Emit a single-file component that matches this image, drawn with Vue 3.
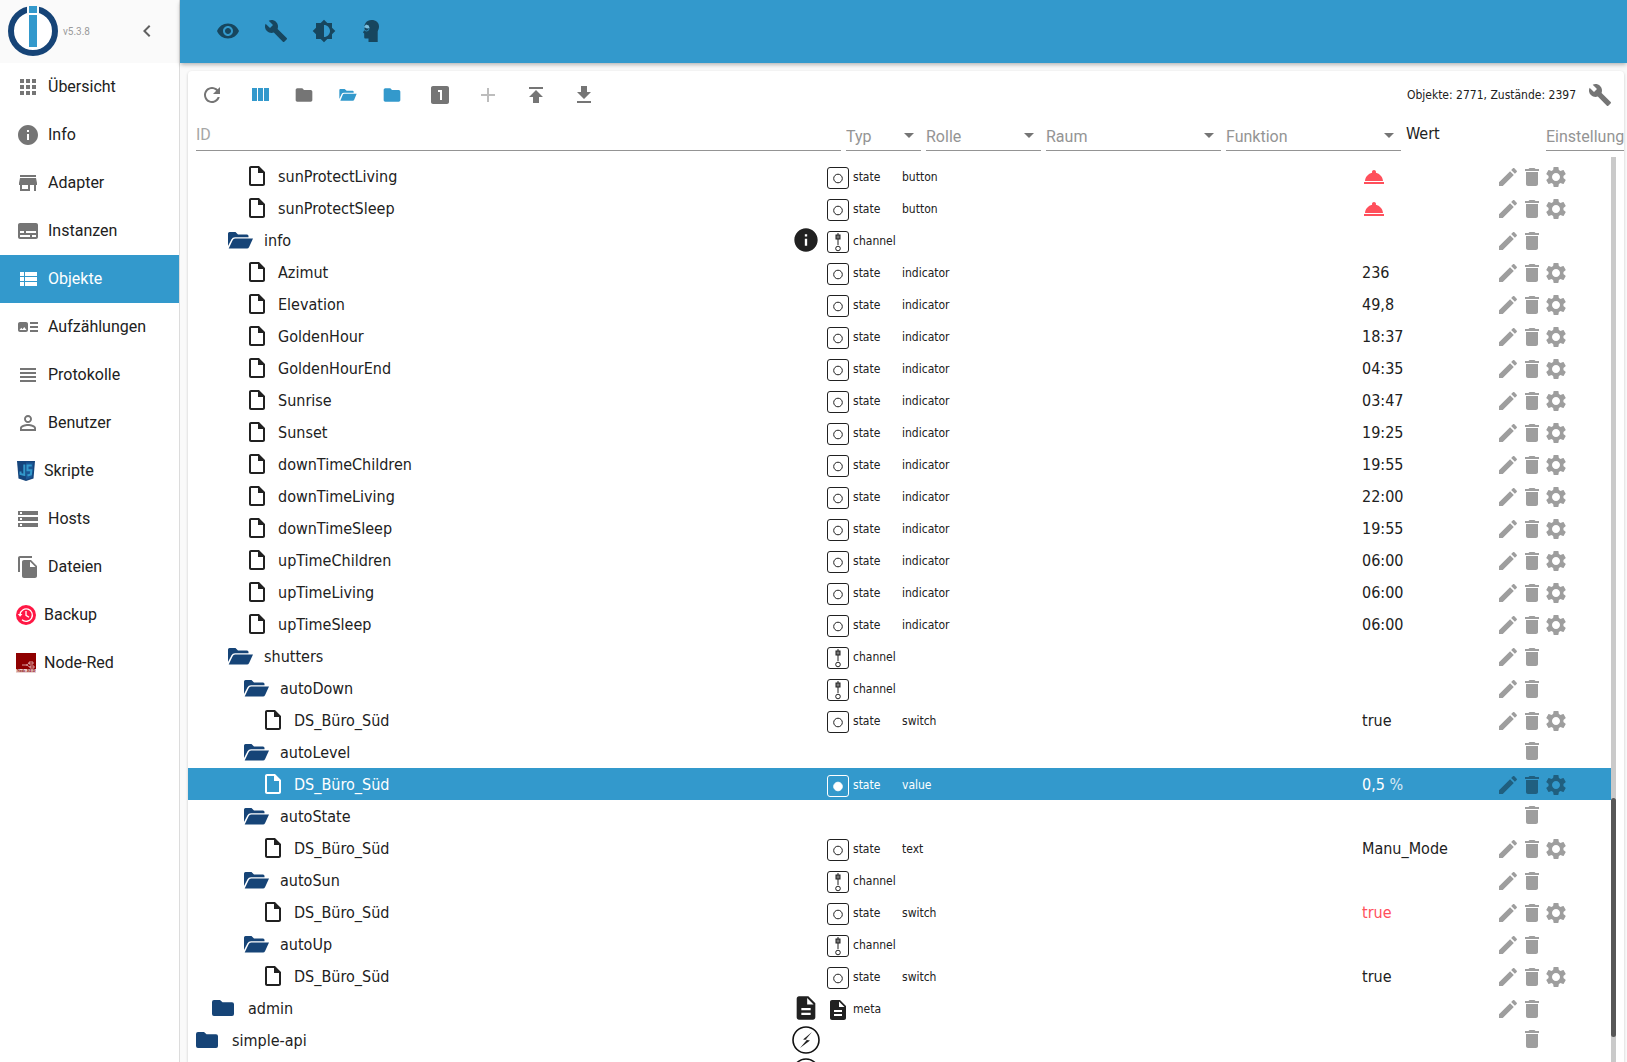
<script setup>
import { ref } from 'vue'

const icons = {
  apps: 'M4 8h4V4H4v4zm6 12h4v-4h-4v4zm-6 0h4v-4H4v4zm0-6h4v-4H4v4zm6 0h4v-4h-4v4zm6-10v4h4V4h-4zm-6 4h4V4h-4v4zm6 6h4v-4h-4v4zm0 6h4v-4h-4v4z',
  info: 'M12 2C6.48 2 2 6.48 2 12s4.48 10 10 10 10-4.48 10-10S17.52 2 12 2zm1 15h-2v-6h2v6zm0-8h-2V7h2v2z',
  store: 'M20 4H4v2h16V4zm1 10v-2l-1-5H4l-1 5v2h1v6h10v-6h4v6h2v-6h1zm-9 4H6v-4h6v4z',
  subtitles: 'M20 4H4c-1.1 0-2 .9-2 2v12c0 1.1.9 2 2 2h16c1.1 0 2-.9 2-2V6c0-1.1-.9-2-2-2zM4 12h4v2H4v-2zm10 6H4v-2h10v2zm6 0h-4v-2h4v2zm0-4H10v-2h10v2z',
  viewList: 'M4 14h4v-4H4v4zm0 5h4v-4H4v4zM4 9h4V5H4v4zm5 5h12v-4H9v4zm0 5h12v-4H9v4zM9 5v4h12V5H9z',
  artTrack: 'M22 13h-8v-2h8v2zm0-6h-8v2h8V7zm-8 10h8v-2h-8v2zm-2-8v6c0 1.1-.9 2-2 2H4c-1.1 0-2-.9-2-2V9c0-1.1.9-2 2-2h6c1.1 0 2 .9 2 2zm-1.500 6l-2.250-3-1.750 2.260-1.250-1.510L3.500 15h7z',
  headline: 'M4 15h16v-2H4v2zm0 4h16v-2H4v2zm0-8h16V9H4v2zm0-6v2h16V5H4z',
  person: 'M12 5.900c1.160 0 2.100.94 2.100 2.100s-.94 2.100-2.100 2.100S9.900 9.160 9.900 8s.94-2.100 2.100-2.100m0 9c2.970 0 6.100 1.460 6.100 2.100v1.100H5.900V17c0-.64 3.130-2.100 6.100-2.100M12 4C9.790 4 8 5.790 8 8s1.790 4 4 4 4-1.790 4-4-1.790-4-4-4zm0 9c-2.670 0-8 1.340-8 4v3h16v-3c0-2.660-5.330-4-8-4z',
  storage: 'M2 20h20v-4H2v4zm2-3h2v2H4v-2zM2 4v4h20V4H2zm4 3H4V5h2v2zm-4 7h20v-4H2v4zm2-3h2v2H4v-2z',
  fileCopy: 'M16 1H4c-1.100 0-2 .9-2 2v14h2V3h12V1zm-1 4l6 6v10c0 1.100-.9 2-2 2H7.990C6.890 23 6 22.100 6 21l.01-14c0-1.100.89-2 1.990-2h7zm-1 7h5.500L14 6.500V12z',
  chevron: 'M15.410 7.410L14 6l-6 6 6 6 1.410-1.410L10.830 12z',
  eye: 'M12 4.500C7 4.500 2.730 7.610 1 12c1.730 4.390 6 7.500 11 7.500s9.270-3.110 11-7.500c-1.730-4.390-6-7.500-11-7.500zM12 17c-2.760 0-5-2.240-5-5s2.240-5 5-5 5 2.240 5 5-2.240 5-5 5zm0-8c-1.660 0-3 1.340-3 3s1.340 3 3 3 3-1.340 3-3-1.340-3-3-3z',
  build: 'M22.700 19l-9.100-9.100c.9-2.300.4-5-1.500-6.900-2-2-5-2.400-7.400-1.300L9 6 6 9 1.600 4.700C.4 7.100.9 10.100 2.900 12.100c1.900 1.900 4.600 2.400 6.900 1.500l9.100 9.100c.4.4 1 .4 1.400 0l2.300-2.300c.5-.4.5-1.100.1-1.400z',
  brightness: 'M20 15.310L23.310 12 20 8.690V4h-4.690L12 .69 8.690 4H4v4.690L.69 12 4 15.310V20h4.690L12 23.310 15.310 20H20v-4.690zM12 18V6c3.310 0 6 2.690 6 6s-2.690 6-6 6z',
  refresh: 'M17.650 6.350C16.200 4.900 14.210 4 12 4c-4.420 0-7.990 3.580-7.990 8s3.570 8 7.990 8c3.730 0 6.840-2.550 7.730-6h-2.080c-.82 2.330-3.040 4-5.650 4-3.310 0-6-2.690-6-6s2.690-6 6-6c1.660 0 3.140.69 4.220 1.780L13 11h7V4l-2.350 2.350z',
  columns: 'M4 5h5v13H4zM10 5h5v13h-5zM16 5h5v13h-5z',
  folder: 'M10 4H4c-1.100 0-1.990.9-1.990 2L2 18c0 1.100.9 2 2 2h16c1.100 0 2-.9 2-2V8c0-1.100-.9-2-2-2h-8l-2-2z',
  one: 'M19 3H5c-1.100 0-2 .9-2 2v14c0 1.100.9 2 2 2h14c1.100 0 2-.9 2-2V5c0-1.100-.9-2-2-2zm-5 14h-2V9h-2V7h4v10z',
  add: 'M19 13h-6v6h-2v-6H5v-2h6V5h2v6h6v2z',
  publish: 'M5 4v2h14V4H5zm0 10h4v6h6v-6h4l-7-7-7 7z',
  download: 'M19 9h-4V3H9v6H5l7 7 7-7zM5 18v2h14v-2H5z',
  edit: 'M3 17.250V21h3.750L17.810 9.940l-3.750-3.750L3 17.250zM20.710 7.040c.39-.39.39-1.020 0-1.410l-2.340-2.340c-.39-.39-1.020-.39-1.410 0l-1.830 1.830 3.750 3.750 1.830-1.830z',
  trash: 'M6 19c0 1.100.9 2 2 2h8c1.100 0 2-.9 2-2V7H6v12zM19 4h-3.500l-1-1h-5l-1 1H5v2h14V4z',
  gear: 'M19.430 12.980c.04-.32.07-.64.07-.98s-.03-.66-.07-.98l2.110-1.650c.19-.15.24-.42.12-.64l-2-3.460c-.12-.22-.39-.3-.61-.22l-2.490 1c-.52-.4-1.080-.73-1.690-.98l-.38-2.650C14.460 2.180 14.250 2 14 2h-4c-.25 0-.46.18-.49.42l-.38 2.650c-.61.25-1.170.59-1.690.98l-2.490-1c-.23-.09-.49 0-.61.22l-2 3.460c-.13.22-.07.49.12.64l2.110 1.650c-.04.32-.07.65-.07.98s.03.66.07.98l-2.110 1.650c-.19.15-.24.42-.12.64l2 3.460c.12.22.39.3.61.22l2.490-1c.52.4 1.080.73 1.690.98l.38 2.650c.03.24.24.42.49.42h4c.25 0 .46-.18.49-.42l.38-2.650c.61-.25 1.170-.59 1.690-.98l2.490 1c.23.09.49 0 .61-.22l2-3.460c.12-.22.07-.49-.12-.64l-2.110-1.650zM12 16c-2.210 0-4-1.790-4-4s1.790-4 4-4 4 1.790 4 4-1.790 4-4 4z',
  bell: 'M2 17h20v2H2zm11.840-9.210c.1-.24.16-.51.16-.79 0-1.100-.9-2-2-2s-2 .9-2 2c0 .28.06.55.16.79C6.250 8.600 3.270 11.930 3 16h18c-.27-4.070-3.250-7.400-7.160-8.210z',
  description: 'M14 2H6c-1.100 0-1.990.9-1.990 2L4 20c0 1.100.89 2 1.990 2H18c1.100 0 2-.9 2-2V8l-6-6zm2 16H8v-2h8v2zm0-4H8v-2h8v2zm-3-5V3.500L18.500 9H13z',
}

const nav = [
  { label: 'Übersicht', icon: 'apps' },
  { label: 'Info', icon: 'info' },
  { label: 'Adapter', icon: 'store' },
  { label: 'Instanzen', icon: 'subtitles' },
  { label: 'Objekte', icon: 'viewList', active: true },
  { label: 'Aufzählungen', icon: 'artTrack' },
  { label: 'Protokolle', icon: 'headline' },
  { label: 'Benutzer', icon: 'person' },
  { label: 'Skripte', logo: 'js' },
  { label: 'Hosts', icon: 'storage' },
  { label: 'Dateien', icon: 'fileCopy' },
  { label: 'Backup', logo: 'backup' },
  { label: 'Node-Red', logo: 'node' },
]

const state = (name, level, role, value, extra = {}) =>
  ({ name, level, kind: 'file', type: 'state', role, value, edit: true, gear: true, ...extra })
const folder = (name, level, extra = {}) =>
  ({ name, level, kind: 'open', type: 'channel', edit: true, ...extra })

const rows = [
  state('sunProtectLiving', 3, 'button', '', { bell: true }),
  state('sunProtectSleep', 3, 'button', '', { bell: true }),
  folder('info', 2, { aux: 'info' }),
  state('Azimut', 3, 'indicator', '236'),
  state('Elevation', 3, 'indicator', '49,8'),
  state('GoldenHour', 3, 'indicator', '18:37'),
  state('GoldenHourEnd', 3, 'indicator', '04:35'),
  state('Sunrise', 3, 'indicator', '03:47'),
  state('Sunset', 3, 'indicator', '19:25'),
  state('downTimeChildren', 3, 'indicator', '19:55'),
  state('downTimeLiving', 3, 'indicator', '22:00'),
  state('downTimeSleep', 3, 'indicator', '19:55'),
  state('upTimeChildren', 3, 'indicator', '06:00'),
  state('upTimeLiving', 3, 'indicator', '06:00'),
  state('upTimeSleep', 3, 'indicator', '06:00'),
  folder('shutters', 2),
  folder('autoDown', 3),
  state('DS_Büro_Süd', 4, 'switch', 'true'),
  folder('autoLevel', 3, { type: '', edit: false }),
  state('DS_Büro_Süd', 4, 'value', '0,5', { unit: '%', selected: true }),
  folder('autoState', 3, { type: '', edit: false }),
  state('DS_Büro_Süd', 4, 'text', 'Manu_Mode'),
  folder('autoSun', 3),
  state('DS_Büro_Süd', 4, 'switch', 'true', { alert: true }),
  folder('autoUp', 3),
  state('DS_Büro_Süd', 4, 'switch', 'true'),
  folder('admin', 1, { kind: 'closed', type: 'meta', aux: 'description' }),
  folder('simple-api', 0, { kind: 'closed', type: '', aux: 'bolt', edit: false }),
  folder('', 0, { kind: '', type: '', aux: 'bolt', edit: false, last: true }),
]

const filters = ['Typ', 'Rolle', 'Raum', 'Funktion']
const idFilter = ref('')
const thumb = { top: 70.8, height: 26.4 }
</script>

<template>
  <div class="app">
    <aside class="sidebar">
      <div class="brand">
        <svg class="logo" viewBox="0 0 50 50" aria-label="ioBroker">
          <circle cx="25" cy="25" r="22" fill="#fff" stroke="#164477" stroke-width="6" />
          <rect x="19" y="0" width="12" height="9" fill="#fafafa" />
          <rect x="20" y="7" width="10" height="35" fill="#fff" />
          <rect x="21" y="0" width="8" height="7" fill="#3399cc" />
          <rect x="21" y="9" width="8" height="32" fill="#3399cc" />
        </svg>
        <span class="version">v5.3.8</span>
        <button class="collapse" aria-label="Menü einklappen">
          <svg class="icon" viewBox="0 0 24 24"><path :d="icons.chevron" /></svg>
        </button>
      </div>
      <nav>
        <a v-for="n in nav" :key="n.label" href="#" class="nav-item" :class="{ active: n.active }">
          <svg v-if="n.icon" class="icon" viewBox="0 0 24 24"><path :d="icons[n.icon]" /></svg>
          <svg v-else-if="n.logo === 'js'" class="nav-logo" viewBox="0 0 20 20">
            <path d="M1 0h18l-1.500 17.500L10 20l-7.500-2.500z" fill="#15457c" />
            <path d="M10 1.500h7.400l-1.300 15L10 18.500z" fill="#1b5795" />
            <path d="M8.300 3.500v10.500L4.500 13V10.500M15.800 4.500h-4.300v4.800h3.800l-.4 4.200-3.500 1" fill="none" stroke="#3399cc" stroke-width="2" />
          </svg>
          <svg v-else-if="n.logo === 'backup'" class="nav-logo" viewBox="0 0 20 20">
            <circle cx="10" cy="10" r="10" fill="#ff1744" />
            <path d="M4 9.500a6.200 6.200 0 1 1 2 5.200M10 6v4.300l3 2" fill="none" stroke="#fff" stroke-width="1.300" />
            <path d="M1.800 9h4.600l-2.300 2.800z" fill="#fff" />
          </svg>
          <svg v-else class="nav-logo" viewBox="0 0 20 20">
            <rect width="20" height="16" fill="#8f0000" />
            <path d="M6 12h4c2 0 2-2 4-2M10 12c2 0 2 2 5 2M13 9h4v2h-4zM14 13h4v2h-4z" fill="none" stroke="#d9a0a0" stroke-width="1" />
            <rect y="16" width="20" height="4" fill="#ead4d4" />
            <text x="10" y="19" text-anchor="middle" class="tiny">Node-RED</text>
          </svg>
          <span>{{ n.label }}</span>
        </a>
      </nav>
    </aside>

    <div class="content">
      <header class="appbar">
        <button v-for="i in ['eye', 'build', 'brightness']" :key="i" class="icon-btn" :aria-label="i">
          <svg class="icon" viewBox="0 0 24 24"><path :d="icons[i]" /></svg>
        </button>
        <button class="icon-btn" aria-label="Expertenmodus">
          <svg class="icon" viewBox="0 0 24 24">
            <path d="M11.500 1C16 1 19 3.500 19 7.500c0 2-.8 3.500-1.300 5V23H8.500v-3.500H5.500c-.8 0-1.300-.5-1.300-1.500v-3.500L3 13.500l1.300-2.500C3.500 5 6.500 1 11.500 1z" />
            <circle cx="6.500" cy="9.500" r="2.500" fill="none" stroke="#3399cc" stroke-width="0.8" />
            <path d="M4 8l2-2.500 2.700 1L9.500 9 7 9.500z" fill="#7cc0e0" />
          </svg>
        </button>
      </header>

      <main class="card">
        <div class="toolbar">
          <button class="icon-btn" aria-label="Aktualisieren"><svg class="icon" viewBox="0 0 24 24"><path :d="icons.refresh" /></svg></button>
          <button class="icon-btn blue" aria-label="Spalten"><svg class="icon" viewBox="0 0 24 24"><path :d="icons.columns" /></svg></button>
          <div class="folder-group">
            <button class="icon-btn" aria-label="Alle schließen"><svg class="icon small" viewBox="0 0 24 24"><path :d="icons.folder" /></svg></button>
            <button class="icon-btn blue" aria-label="Alle öffnen">
              <svg class="open-small" viewBox="0 0 26 18"><path d="M0 15V1.500Q0 0 1.500 0H8l3 2.500h9q1.500 0 1.500 1.500v1.500H7Q4.500 5.500 3.500 7.500zM1.500 17.500L5 9q.7-1.800 2.500-1.800H26l-3.700 9q-.6 1.300-2 1.300z" /></svg>
            </button>
            <button class="icon-btn blue" aria-label="Ebene schließen"><svg class="icon small" viewBox="0 0 24 24"><path :d="icons.folder" /></svg></button>
          </div>
          <button class="icon-btn" aria-label="Zustände"><svg class="icon" viewBox="0 0 24 24"><path :d="icons.one" /></svg></button>
          <button class="icon-btn" disabled aria-label="Hinzufügen"><svg class="icon" viewBox="0 0 24 24"><path :d="icons.add" /></svg></button>
          <button class="icon-btn" aria-label="Hochladen"><svg class="icon" viewBox="0 0 24 24"><path :d="icons.publish" /></svg></button>
          <button class="icon-btn" aria-label="Herunterladen"><svg class="icon" viewBox="0 0 24 24"><path :d="icons.download" /></svg></button>
          <span class="counts">Objekte: 2771, Zustände: 2397</span>
          <button class="icon-btn" aria-label="Einstellungen"><svg class="icon" viewBox="0 0 24 24"><path :d="icons.build" /></svg></button>
        </div>

        <div class="filters">
          <input v-model="idFilter" class="field" placeholder="ID" aria-label="ID" />
          <div v-for="f in filters" :key="f" class="field-wrap">
            <select class="field" :aria-label="f"><option>{{ f }}</option></select>
            <svg class="arrow" viewBox="0 0 10 5"><path d="M0 0l5 5 5-5z" /></svg>
          </div>
          <span class="col-title">Wert</span>
          <div class="field-wrap">
            <select class="field" aria-label="Einstellungen"><option>Einstellungen</option></select>
          </div>
        </div>

        <div class="list">
          <table class="tree">
            <tbody>
              <tr v-for="(r, i) in rows" :key="i" :class="{ selected: r.selected }">
                <td class="name" :style="{ paddingLeft: 8 + 16 * r.level + 'px' }">
                  <svg v-if="r.kind === 'file'" class="glyph file" viewBox="0 0 24 24">
                    <path d="M14 2H6c-1.100 0-2 .9-2 2v16c0 1.100.9 2 2 2h12c1.100 0 2-.9 2-2V8l-6-6zM6 20V4h7v5h5v11H6z" />
                  </svg>
                  <svg v-else-if="r.kind === 'open'" class="glyph open" viewBox="0 0 25 17">
                    <path d="M0 14V1.500Q0 0 1.500 0H7.500l2.500 2.500h9q1.500 0 1.500 1.500v1.300H7Q4.500 5.300 3.500 7.300zM.7 16.500L4.500 8.500Q5.300 6.500 7.200 6.500H25l-4 8.700Q20.400 16.500 19 16.500z" />
                  </svg>
                  <svg v-else-if="r.kind === 'closed'" class="glyph closed" viewBox="0 0 22 16">
                    <path d="M2 0h6l2.500 2.300H20q2 0 2 2V14q0 2-2 2H2q-2 0-2-2V2q0-2 2-2z" />
                  </svg>
                  <span class="label">{{ r.name }}</span>
                  <svg v-if="r.aux === 'bolt'" class="aux" viewBox="0 0 28 28">
                    <circle cx="14" cy="14" r="13" fill="#fff" stroke="#111" stroke-width="1.600" />
                    <path d="M20 6l-9 7.500 4 .3L8 22l10-7.500-4.500-.8z" />
                  </svg>
                  <svg v-else-if="r.aux" class="aux" viewBox="0 0 24 24"><path :d="icons[r.aux]" /></svg>
                </td>
                <td class="type">
                  <svg v-if="r.type === 'state'" class="type-icon outline" viewBox="0 0 24 24">
                    <rect x="1.500" y="1.500" width="21" height="21" rx="2.500" />
                    <circle cx="12" cy="12.500" r="4.300" :fill="r.selected ? '#fff' : 'none'" />
                  </svg>
                  <svg v-else-if="r.type === 'channel'" class="type-icon outline" viewBox="0 0 24 24">
                    <rect x="1.500" y="1.500" width="21" height="21" rx="2.500" />
                    <path d="M12 3v12" />
                    <rect x="10" y="5" width="4" height="4" fill="#777" />
                    <circle cx="12" cy="18.500" r="2.300" />
                  </svg>
                  <svg v-else-if="r.type === 'meta'" class="type-icon" viewBox="0 0 24 24"><path :d="icons.description" /></svg>
                  <span>{{ r.type }}</span>
                </td>
                <td class="role">{{ r.role }}</td>
                <td></td>
                <td></td>
                <td class="value" :class="{ alert: r.alert }">
                  <svg v-if="r.bell" class="bell" viewBox="0 0 24 24"><path :d="icons.bell" /></svg>
                  <template v-else>{{ r.value }}<span v-if="r.unit" class="unit">&nbsp;{{ r.unit }}</span></template>
                </td>
                <td class="actions" :class="{ bare: !r.edit }">
                  <template v-if="!r.last">
                    <button v-if="r.edit" aria-label="Bearbeiten"><svg class="icon" viewBox="0 0 24 24"><path :d="icons.edit" /></svg></button>
                    <button aria-label="Löschen"><svg class="icon" viewBox="0 0 24 24"><path :d="icons.trash" /></svg></button>
                    <button v-if="r.gear" aria-label="Konfigurieren"><svg class="icon" viewBox="0 0 24 24"><path :d="icons.gear" /></svg></button>
                  </template>
                </td>
              </tr>
            </tbody>
          </table>
          <div class="track">
            <div class="thumb" :style="{ top: thumb.top + '%', height: thumb.height + '%' }"></div>
          </div>
        </div>
      </main>
    </div>
  </div>
</template>

<style>
body {
  margin: 0;
  background: #fafafa;
}
</style>

<style scoped>
* {
  box-sizing: border-box;
}
.app {
  display: flex;
  height: 100vh;
  overflow: hidden;
  font-family: Roboto, "Liberation Sans", sans-serif;
  font-size: 16px;
  color: #212121;
}
button {
  display: flex;
  align-items: center;
  justify-content: center;
  padding: 0;
  border: 0;
  background: none;
  color: inherit;
  font: inherit;
  cursor: pointer;
}
svg {
  display: block;
  flex: none;
  fill: currentColor;
}
.icon {
  width: 24px;
  height: 24px;
}
.sidebar {
  flex: 0 0 180px;
  background: #fff;
  border-right: 1px solid #dcdcdc;
}
.brand {
  display: flex;
  align-items: center;
  height: 63px;
  padding: 0 20px 1px 8px;
  background: #fafafa;
}
.logo {
  width: 50px;
  height: 50px;
}
.version {
  flex: 1;
  padding-left: 5px;
  font-size: 10px;
  color: #9a9a9a;
}
.collapse {
  color: #616161;
}
.nav-item {
  display: flex;
  align-items: center;
  gap: 8px;
  height: 48px;
  padding-left: 16px;
  color: #212121;
  text-decoration: none;
}
.nav-item .icon {
  color: #757575;
}
.nav-item.active,
.nav-item.active .icon {
  color: #fff;
}
.nav-item.active {
  background: #3399cc;
}
.nav-item span {
  line-height: 24px;
}
.nav-logo {
  width: 20px;
  height: 20px;
}
.tiny {
  font: bold 4px "Liberation Serif", serif;
  fill: #8f0000;
}
.content {
  display: flex;
  flex: 1;
  flex-direction: column;
  min-width: 0;
}
.appbar {
  position: relative;
  display: flex;
  flex: none;
  align-items: center;
  height: 63px;
  padding: 0 0 1px 24px;
  background: #3399cc;
  box-shadow: 0 2px 4px -1px rgba(0, 0, 0, 0.2), 0 2px 5px rgba(0, 0, 0, 0.14);
  color: #17465e;
}
.icon-btn {
  flex: none;
  width: 48px;
  height: 48px;
}
.card {
  display: flex;
  flex: 1;
  flex-direction: column;
  min-height: 0;
  margin: 8px 3px 0 8px;
  overflow: hidden;
  background: #fff;
  border-radius: 4px 4px 0 0;
  box-shadow: 0 1px 3px rgba(0, 0, 0, 0.2);
}
.toolbar {
  display: flex;
  flex: none;
  align-items: center;
  height: 48px;
  color: #757575;
}
.toolbar .blue {
  color: #3399cc;
}
.toolbar button:disabled {
  color: #bdbdbd;
}
.folder-group {
  display: flex;
  gap: 4px;
  padding-right: 4px;
}
.folder-group .icon-btn {
  width: 40px;
}
.small {
  width: 20px;
  height: 20px;
}
.open-small {
  width: 18px;
  height: 12px;
}
.counts {
  margin-left: auto;
  color: #212121;
}
.counts,
.type,
.role {
  font-family: "DejaVu Sans Condensed", "DejaVu Sans", sans-serif;
  font-size: 12px;
}
.filters {
  display: grid;
  grid-template-columns: minmax(0, 1fr) 75px 115px 175px 175px 135px 78px;
  gap: 5px;
  flex: none;
  height: 32px;
  padding-left: 8px;
}
.field-wrap {
  position: relative;
  min-width: 0;
}
.field {
  width: 100%;
  height: 32px;
  padding: 4px 0 0;
  border: 0;
  border-bottom: 1px solid #949494;
  border-radius: 0;
  outline: 0;
  background: transparent;
  appearance: none;
  color: #949494;
  font: inherit;
}
input.field {
  padding: 0;
}
.field::placeholder {
  color: #a6a6a6;
  opacity: 1;
}
.arrow {
  position: absolute;
  top: 14px;
  right: 7px;
  width: 10px;
  height: 5px;
  color: #757575;
}
.col-title,
.name,
.value {
  font-family: "DejaVu Sans Condensed", "DejaVu Sans", sans-serif;
}
.col-title {
  line-height: 30px;
}
.list {
  display: flex;
  flex: 1;
  min-height: 0;
  margin: 6px 8px 0 0;
  overflow: hidden;
}
.tree {
  display: block;
  flex: 1;
  padding-top: 3px;
}
.tree tbody {
  display: block;
}
.tree tr {
  display: grid;
  grid-template-columns: minmax(0, 1fr) 80px 120px 170px 170px 134px 115px;
  height: 32px;
}
.tree td {
  display: flex;
  align-items: center;
  min-width: 0;
  padding: 0;
}
.tree .name {
  padding-right: 2px;
}
.tree .type,
.tree .role {
  padding-top: 2px;
}
.glyph {
  margin-right: 8px;
  color: #164477;
}
.file {
  width: 24px;
  height: 24px;
  margin-left: 1px;
  margin-right: 9px;
  color: #212121;
}
.open {
  width: 25px;
  height: 17px;
  margin-right: 11px;
}
.closed {
  width: 22px;
  height: 16px;
  margin-right: 14px;
}
.label {
  flex: 1;
}
.aux {
  width: 28px;
  height: 28px;
}
.type-icon {
  width: 24px;
  height: 24px;
  margin: 1px 3px 0 4px;
}
.outline {
  fill: none;
  stroke: currentColor;
}
.bell {
  width: 24px;
  height: 24px;
  margin-top: 2px;
  color: #ff4f5b;
}
.alert {
  color: #ff4f5b;
}
.unit {
  opacity: 0.8;
}
.tree .actions {
  padding-top: 2px;
  color: #9e9e9e;
}
.tree .bare {
  padding: 0 0 2px 24px;
}
.selected,
.selected .file {
  color: #fff;
}
.selected {
  background: #3399cc;
}
.selected .actions {
  color: #205f7f;
}
.track {
  position: relative;
  flex: 0 0 5px;
  background: #cacaca;
}
.thumb {
  position: absolute;
  left: 0;
  width: 100%;
  border-radius: 3px;
  background: #575757;
}
</style>
